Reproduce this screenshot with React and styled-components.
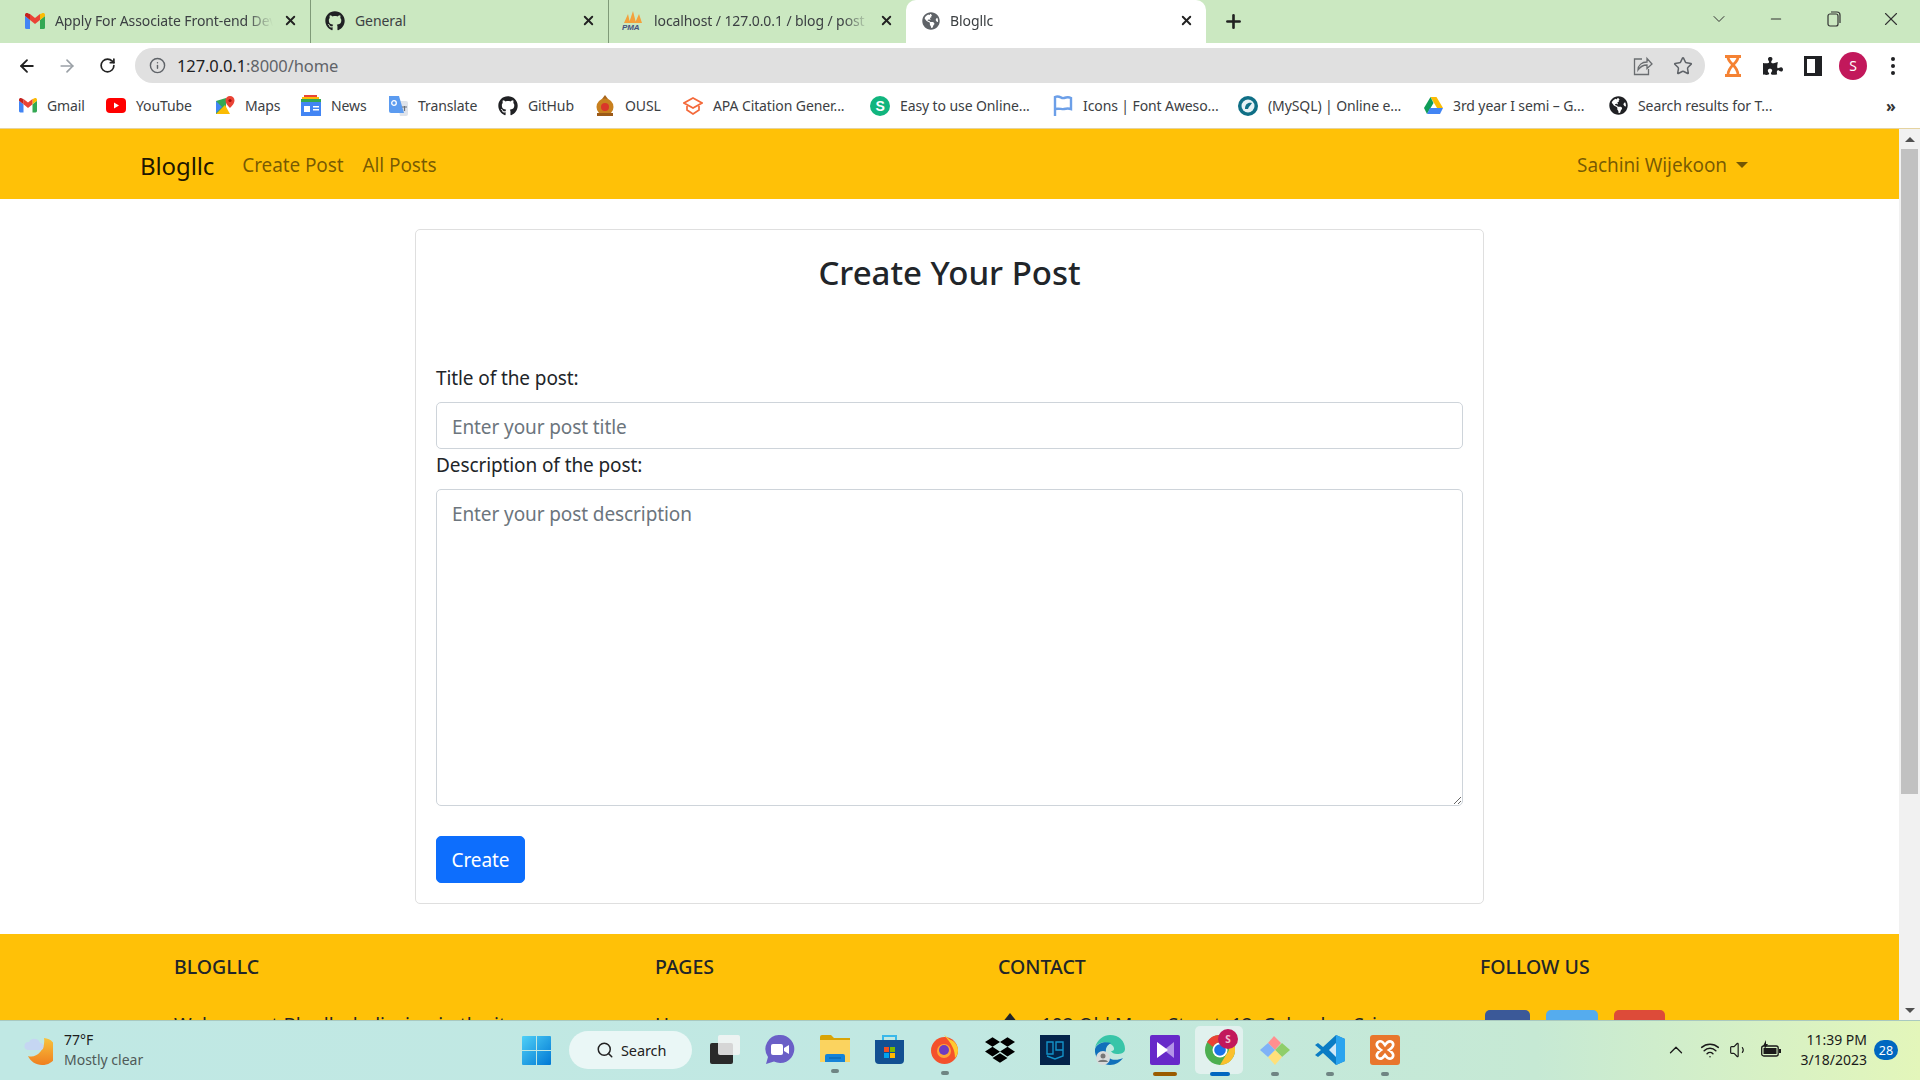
import React from "react";
import styled, { createGlobalStyle } from "styled-components";
import { FaGithub, FaGlobeAmericas, FaDropbox, FaPuzzlePiece } from "react-icons/fa";
import { ArrowLeft, ArrowRight, RotateCw, Star, Info, Search, ChevronUp, ChevronDown, X, Plus, Minus, Wifi, Volume1 } from "lucide-react";

const FONT = `"Noto Sans", "Open Sans", "Liberation Sans", sans-serif`;

const Global = createGlobalStyle`
  * { box-sizing: border-box; }
  html, body { margin: 0; padding: 0; height: 100%; overflow: hidden; background: #fff; }
  body { font-family: ${FONT}; color: #212529; }
  ::placeholder { color: #6c757d; opacity: 1; }
`;

const Screen = styled.div`
  width: 1920px;
  height: 1080px;
  display: flex;
  flex-direction: column;
  overflow: hidden;
`;

/* browser chrome */
const TabStrip = styled.div`
  height: 43px;
  flex: none;
  background: #cbe8c1;
  display: flex;
  align-items: stretch;
`;

const Tab = styled.div`
  width: ${(p) => p.$w}px;
  padding-left: ${(p) => p.$left}px;
  padding-right: 12px;
  padding-bottom: 2px;
  display: flex;
  align-items: center;
  gap: 10px;
  font-size: 14px;
  letter-spacing: -0.1px;
  color: #3c4043;
  position: relative;
  background: ${(p) => (p.$active ? "#fff" : "transparent")};
  border-radius: ${(p) => (p.$active ? "10px 10px 0 0" : "0")};
  border-right: ${(p) => (p.$sep ? "1px solid #7f9a78" : "none")};
  background-clip: ${(p) => (p.$sep ? "padding-box" : "border-box")};
`;

const TabTitle = styled.span`
  flex: 1;
  white-space: nowrap;
  overflow: hidden;
  -webkit-mask-image: linear-gradient(90deg, #000 88%, transparent);
  mask-image: linear-gradient(90deg, #000 88%, transparent);
`;

const NewTab = styled.div`
  width: 54px;
  display: flex;
  align-items: center;
  justify-content: center;
  color: #222;
`;

const WindowButtons = styled.div`
  margin-left: auto;
  display: flex;
  align-items: center;
  padding: 0 0 6px;
  color: #333;
`;

const WindowButton = styled.div`
  width: 57.5px;
  display: flex;
  justify-content: center;
`;

const Toolbar = styled.div`
  height: 40px;
  flex: none;
  background: #fff;
  display: flex;
  align-items: flex-start;
  padding: 5px 0 0 7px;
`;

const NavIcon = styled.div`
  width: 40px;
  height: 35px;
  display: flex;
  align-items: center;
  justify-content: center;
  color: ${(p) => p.$color || "#222"};
`;

const Omnibox = styled.div`
  width: 1570px;
  height: 35px;
  margin-left: 8px;
  border-radius: 18px;
  background: #e0e0e0;
  display: flex;
  align-items: center;
  padding: 0 12px 0 14px;
  font-size: 16.5px;
  letter-spacing: -0.1px;
  color: #202124;
`;

const Host = styled.span`
  margin-left: 11px;
`;

const Muted = styled.span`
  color: #5f6368;
`;

const OmniRight = styled.div`
  margin-left: auto;
  display: flex;
  align-items: center;
  gap: 20px;
  color: #5f6368;
`;

const ToolRight = styled.div`
  margin-left: 8px;
  display: flex;
  align-items: center;
`;

const Avatar = styled.div`
  width: 28px;
  height: 28px;
  border-radius: 50%;
  background: #c2185b;
  color: #fff;
  font-size: 14px;
  display: flex;
  align-items: center;
  justify-content: center;
`;

const Bookmarks = styled.div`
  height: 46px;
  flex: none;
  background: #fff;
  display: flex;
  align-items: center;
  padding: 0 0 0 19px;
  border-bottom: 1px solid #e5d3a0;
`;

const Bookmark = styled.div`
  width: ${(p) => p.$w}px;
  display: flex;
  align-items: center;
  gap: 10px;
  font-size: 14px;
  letter-spacing: -0.1px;
  color: #3c4043;
  white-space: nowrap;
`;

const More = styled.div`
  margin-left: 89px;
  font-size: 16px;
  font-weight: 700;
  color: #333;
`;

/* page */
const Viewport = styled.div`
  flex: 1;
  min-height: 0;
  display: flex;
`;

const Page = styled.div`
  flex: 1;
  min-width: 0;
  overflow: hidden;
`;

const Scrollbar = styled.div`
  width: 21px;
  flex: none;
  background: #f1f1f1;
  display: flex;
  flex-direction: column;
  align-items: center;
`;

const ScrollArrow = styled.div`
  height: 20px;
  flex: none;
  display: flex;
  align-items: center;
  justify-content: center;
  &::after {
    content: "";
    border-left: 5px solid transparent;
    border-right: 5px solid transparent;
    ${(p) => (p.$down ? "border-top: 5px solid #505050;" : "border-bottom: 5px solid #505050;")}
  }
`;

const ScrollThumb = styled.div`
  width: 17px;
  height: 645px;
  background: #c1c1c1;
`;

const ScrollGap = styled.div`
  flex: 1;
`;

const Navbar = styled.nav`
  height: 70px;
  background: #ffc107;
  display: flex;
  align-items: center;
  padding: 2px 151px 0 140px;
  font-size: 19px;
  letter-spacing: -0.1px;
  color: rgba(0, 0, 0, 0.55);
`;

const Brand = styled.div`
  font-size: 24px;
  letter-spacing: -0.1px;
  color: rgba(0, 0, 0, 0.9);
  margin-right: 28px;
`;

const NavLink = styled.div`
  margin-right: 19px;
`;

const UserMenu = styled.div`
  margin-left: auto;
  display: flex;
  align-items: center;
  gap: 9px;
  &::after {
    content: "";
    border-top: 6px solid rgba(0, 0, 0, 0.55);
    border-left: 6px solid transparent;
    border-right: 6px solid transparent;
  }
`;

const Card = styled.div`
  width: 1069px;
  height: 675px;
  margin: 30px 0 30px 415px;
  border: 1px solid #dfdfdf;
  border-radius: 5px;
  padding: 0 20px;
  display: flex;
  flex-direction: column;
`;

const Title = styled.h2`
  margin: 18px 0 0;
  height: 49px;
  line-height: 49px;
  font-size: 33px;
  font-weight: 500;
  text-align: center;
  color: #212529;
`;

const Label = styled.label`
  display: block;
  font-size: 19px;
  letter-spacing: -0.1px;
  line-height: 30px;
  color: #212529;
  margin-top: ${(p) => p.$top}px;
  margin-bottom: ${(p) => p.$bottom}px;
`;

const Input = styled.input`
  display: block;
  width: 100%;
  height: 47px;
  padding: 2px 15px 0;
  border: 1px solid #ced4da;
  border-radius: 5px;
  font: 19px ${FONT};
  letter-spacing: -0.1px;
  outline: none;
`;

const Textarea = styled.textarea`
  display: block;
  width: 100%;
  height: 317px;
  padding: 9px 15px;
  border: 1px solid #ced4da;
  border-radius: 5px;
  font: 19px/30px ${FONT};
  letter-spacing: -0.1px;
  outline: none;
  resize: vertical;
`;

const SubmitButton = styled.button`
  align-self: flex-start;
  width: 89px;
  height: 47px;
  margin-top: 30px;
  background: #0d6efd;
  color: #fff;
  border: 1px solid #0d6efd;
  border-radius: 5px;
  font: 19px ${FONT};
  letter-spacing: -0.1px;
`;

const Footer = styled.footer`
  background: #ffc107;
  height: 300px;
  padding: 18px 0 0 174px;
  display: grid;
  grid-template-columns: 481px 343px 482px 300px;
  align-content: start;
  font-size: 19px;
  color: #212529;
`;

const FooterTitle = styled.h5`
  margin: 0 0 28px;
  font-size: 19.5px;
  line-height: 30px;
  font-weight: 500;
  text-transform: uppercase;
`;

const FooterRow = styled.div`
  display: flex;
  align-items: center;
  gap: 23px;
  line-height: 30px;
  white-space: nowrap;
`;

const HomeMark = styled.span`
  width: 0;
  height: 0;
  margin-left: 4px;
  border-left: 8px solid transparent;
  border-right: 8px solid transparent;
  border-bottom: 10px solid #212529;
  margin-top: -14px;
`;

const SocialRow = styled.div`
  display: flex;
  gap: 16px;
  margin: 5px 0 0 5px;
`;

const SocialButton = styled.div`
  width: ${(p) => p.$w}px;
  height: 40px;
  border-radius: 5px;
  background: ${(p) => p.$bg};
`;

/* windows taskbar */
const Taskbar = styled.div`
  height: 60px;
  flex: none;
  border-top: 1px solid #a9c9c0;
  padding-bottom: 1px;
  background: linear-gradient(90deg, #c0e8e4 0%, #c1e8e2 50%, #c6e9d4 80%, #e3f6ba 100%);
  display: flex;
  align-items: center;
  position: relative;
  z-index: 1;
`;

const Weather = styled.div`
  width: 522px;
  flex: none;
  padding-left: 24px;
  display: flex;
  align-items: center;
  gap: 11px;
`;

const WeatherText = styled.div`
  font-size: 14px;
  line-height: 20px;
  color: #1c1c1c;
`;

const WeatherSub = styled.div`
  color: #4f5a58;
`;

const SearchPill = styled.div`
  width: 123px;
  height: 38px;
  margin: 0 5px 0 18px;
  border-radius: 19px;
  background: #eaf7f6;
  display: flex;
  align-items: center;
  padding-left: 27px;
  gap: 7px;
  font-size: 14.5px;
  letter-spacing: -0.1px;
  color: #222;
`;

const Slot = styled.div`
  width: 55px;
  height: 58px;
  display: flex;
  flex-direction: column;
  align-items: center;
  position: relative;
  padding-top: 14px;
  &::before {
    content: "";
    display: ${(p) => (p.$active ? "block" : "none")};
    position: absolute;
    top: 5px;
    left: 3px;
    width: 48px;
    height: 48px;
    border-radius: 5px;
    background: #e1f1ee;
  }
  svg {
    position: relative;
  }
`;

const Dot = styled.div`
  margin-top: 7px;
  position: relative;
  width: ${(p) => p.$w}px;
  height: 4px;
  border-radius: 2px;
  background: ${(p) => p.$color};
`;

const Badge = styled.div`
  position: absolute;
  top: 8px;
  left: 26px;
  width: 20px;
  height: 20px;
  border-radius: 50%;
  background: #c2185b;
  color: #f2bccf;
  font-size: 10px;
  font-weight: 700;
  display: flex;
  align-items: center;
  justify-content: center;
`;

const Tray = styled.div`
  margin-left: auto;
  padding-right: 22px;
  display: flex;
  align-items: center;
  color: #1a1a1a;
`;

const TrayIcon = styled.div`
  width: ${(p) => p.$w}px;
  display: flex;
  justify-content: center;
`;

const Clock = styled.div`
  margin: 0 7px 0 13px;
  font-size: 14px;
  line-height: 20px;
  text-align: right;
`;

const CountBadge = styled.div`
  width: 24px;
  height: 20px;
  border-radius: 10px;
  background: #0067c0;
  color: #fff;
  font-size: 12.5px;
  display: flex;
  align-items: center;
  justify-content: center;
`;

/* icons */
const Gmail = ({ s = 20 }) => (
  <svg width={s} height={s * 0.8} viewBox="0 0 20 16">
    <path d="M0 3v11.5A1.5 1.5 0 0 0 1.5 16H5V7z" fill="#4285f4" />
    <path d="M20 3v11.5a1.5 1.5 0 0 1-1.5 1.5H15V7z" fill="#34a853" />
    <path d="M15 1v6l5-4V2c0-2-2-2.500-3.200-1.500z" fill="#fbbc04" />
    <path d="M5 7V1l5 4 5-4v6l-5 4z" fill="#ea4335" />
    <path d="M0 2c0-2 2-2.500 3.200-1.500L5 1v6L0 3z" fill="#c5221f" />
  </svg>
);

const YouTube = () => (
  <svg width="20" height="15" viewBox="0 0 20 15">
    <rect width="20" height="15" rx="4" fill="#f00" />
    <path d="M8 4.500v6l5-3z" fill="#fff" />
  </svg>
);

const Maps = () => (
  <svg width="20" height="20" viewBox="0 0 20 20">
    <path d="M1 5l10-3v16L1 18z" fill="#34a853" />
    <path d="M1 18l9-9 5 9z" fill="#fbbc04" />
    <path d="M1 5l6 6-6 6z" fill="#4285f4" />
    <path d="M15 0a4.500 4.500 0 0 1 4.500 4.500C19.500 8 15 12 15 12s-4.500-4-4.500-7.500A4.500 4.500 0 0 1 15 0z" fill="#ea4335" />
    <circle cx="15" cy="4.500" r="1.600" fill="#a50e0e" />
  </svg>
);

const News = () => (
  <svg width="20" height="21" viewBox="0 0 20 21">
    <path d="M3 0h13v5H3z" fill="#ea4335" />
    <path d="M1 2h17v5H1z" fill="#fbbc04" />
    <path d="M0 4h20v5H0z" fill="#34a853" />
    <rect y="7" width="20" height="14" fill="#4285f4" />
    <path d="M3 11h6v6H3zM12 11h6v1.500h-6zM12 14h6v1.500h-6z" fill="#fff" />
  </svg>
);

const Translate = () => (
  <svg width="19" height="20" viewBox="0 0 19 20">
    <path d="M8 5h9a2 2 0 0 1 2 2v11a2 2 0 0 1-2 2h-6z" fill="#dfe3ea" />
    <path d="M0 0h10l5 17H2a2 2 0 0 1-2-2z" fill="#5b9bf0" />
    <circle cx="5" cy="7" r="2.300" fill="none" stroke="#fff" strokeWidth="1.300" />
    <path d="M13 11h5M15.500 10v5" stroke="#6a7078" strokeWidth="1.200" />
  </svg>
);

const Crest = () => (
  <svg width="20" height="22" viewBox="0 0 20 22">
    <path d="M10 0l3 4h-6z" fill="#a8651b" />
    <circle cx="10" cy="12" r="8.500" fill="#c8801f" />
    <circle cx="10" cy="12" r="4" fill="#d9352a" />
    <path d="M2 18h16v3H2z" fill="#9c5a18" />
  </svg>
);

const Cap = () => (
  <svg width="20" height="18" viewBox="0 0 20 18" fill="none" stroke="#f4693a" strokeWidth="1.700">
    <path d="M10 1l9 5-9 5-9-5z" />
    <path d="M4 9v4l6 4 6-4V9" />
  </svg>
);

const Circled = ({ bg, children }) => (
  <svg width="20" height="20" viewBox="0 0 20 20">
    <circle cx="10" cy="10" r="10" fill={bg} />
    {children}
  </svg>
);

const Flag = () => (
  <svg width="20" height="21" viewBox="0 0 20 21" fill="none" stroke="#6c9fe8" strokeWidth="2.400">
    <path d="M2 21V2c5-2 6 2 9 1s5-1 7 0v11c-3-1-5-.500-7 0s-5-1-9 0" />
  </svg>
);

const Drive = () => (
  <svg width="19" height="17" viewBox="0 0 19 17">
    <path d="M6.500 0h6l6.500 11h-6z" fill="#fbbc04" />
    <path d="M6.500 0L0 11l3 6 6.500-11z" fill="#0f9d58" />
    <path d="M3 17h13l3-6H6z" fill="#4285f4" />
  </svg>
);

const Hourglass = () => (
  <svg width="18" height="22" viewBox="0 0 18 22" fill="none" stroke="#f58233" strokeWidth="2.800">
    <path d="M1 1.500h16M1 20.500h16M4 2c0 7 10 8 10 18M14 2C14 9 4 10 4 20" />
  </svg>
);

const SidePanel = () => (
  <svg width="18" height="20" viewBox="0 0 18 20">
    <path d="M0 0h18v20H0z" fill="#202124" />
    <path d="M3 3h8v14H3z" fill="#fff" />
  </svg>
);

const Share = () => (
  <svg width="20" height="20" viewBox="0 0 20 20" fill="none" stroke="#6a6d70" strokeWidth="1.300">
    <path d="M9 3H1.500v15.500h14V13" />
    <path d="M5 14c0-5 4-8 9-8V2.500l5 5.500-5 4.500V9c-4 0-7 2-9 5z" />
  </svg>
);

const Restore = () => (
  <svg width="14" height="16" viewBox="0 0 14 16" fill="none" stroke="#333" strokeWidth="1.200">
    <rect x="1" y="3" width="10" height="12" rx="2" />
    <path d="M4 1h6a3 3 0 0 1 3 3v8" />
  </svg>
);

const PmaLogo = () => (
  <svg width="22" height="20" viewBox="0 0 22 20">
    <path d="M2 12L6 3l2 9zM7 12l4-12 3 12zM13 12l4-9 3 9z" fill="#f3a13b" />
    <text x="0" y="19" fontSize="8" fontWeight="700" fontStyle="italic" fill="#45507f" fontFamily="Liberation Sans">PMA</text>
  </svg>
);

const WeatherIcon = () => (
  <svg width="29" height="30" viewBox="0 0 29 30">
    <defs>
      <linearGradient id="moon" x1="0" y1="0" x2="0" y2="1">
        <stop offset="0" stopColor="#f8c33c" />
        <stop offset="1" stopColor="#ef7f1f" />
      </linearGradient>
    </defs>
    <path d="M20 3a13.500 13.500 0 0 1-2 27C12 30 6 26 4 21c8 3 18-6 16-18z" fill="url(#moon)" />
    <path d="M4 15a4 4 0 0 1 1-8 6 6 0 0 1 11 1 3.500 3.500 0 0 1 0 7z" fill="#c5d6f2" />
  </svg>
);

const WinLogo = () => (
  <svg width="29" height="29" viewBox="0 0 29 29">
    <defs>
      <linearGradient id="win" x1="0" y1="0" x2="1" y2="1">
        <stop offset="0" stopColor="#4fd0f7" />
        <stop offset="1" stopColor="#0078d4" />
      </linearGradient>
    </defs>
    <path d="M1 0h13v14H0V1a1 1 0 0 1 1-1zM15 0h13a1 1 0 0 1 1 1v13H15zM0 15h14v14H1a1 1 0 0 1-1-1zM15 15h14v13a1 1 0 0 1-1 1H15z" fill="url(#win)" />
  </svg>
);

const TaskView = () => (
  <svg width="30" height="29" viewBox="0 0 30 29">
    <rect y="8" width="23" height="21" rx="2" fill="#2a2a2a" />
    <rect x="8" y="0" width="22" height="20" rx="2" fill="#f4f4f4" fillOpacity="0.85" />
  </svg>
);

const Chat = () => (
  <svg width="30" height="29" viewBox="0 0 30 29">
    <path d="M15 0a14 14 0 1 1-6 26.500L1 29l2-7A14 14 0 0 1 15 0z" fill="#6a5fc7" />
    <rect x="6" y="9" width="12" height="11" rx="2" fill="#fff" />
    <path d="M19 13l5-3v9l-5-3z" fill="#fff" />
  </svg>
);

const Folder = () => (
  <svg width="30" height="27" viewBox="0 0 30 27">
    <path d="M0 2a2 2 0 0 1 2-2h9l3 3h16v6H0z" fill="#d9a406" />
    <path d="M0 5h30v22H0z" fill="#fbd35f" />
    <path d="M5 21a2 2 0 0 1 2-2h16a2 2 0 0 1 2 2v6H5z" fill="#1583d8" />
    <path d="M9 23h12" stroke="#0b5da3" strokeWidth="1" />
  </svg>
);

const Store = () => (
  <svg width="29" height="29" viewBox="0 0 29 29">
    <path d="M8 6V1h13v5" fill="none" stroke="#39b8ea" strokeWidth="2" />
    <path d="M0 5h29v20a4 4 0 0 1-4 4H4a4 4 0 0 1-4-4z" fill="#125092" />
    <path d="M9 12h5v5H9z" fill="#f25022" />
    <path d="M15 12h5v5h-5z" fill="#7fba00" />
    <path d="M9 18h5v5H9z" fill="#00a4ef" />
    <path d="M15 18h5v5h-5z" fill="#ffb900" />
  </svg>
);

const Firefox = () => (
  <svg width="29" height="29" viewBox="0 0 29 29">
    <circle cx="14.500" cy="15.500" r="13.500" fill="#f4512c" />
    <path d="M14 0c4 2 4 4 7 5s7 5 7 10c0 3-1 6-3 8 0-8-3-14-11-23z" fill="#ffca30" />
    <circle cx="14" cy="16" r="7" fill="#ffa436" />
    <circle cx="14" cy="15" r="5" fill="#6e3cc0" />
  </svg>
);

const DarkTile = () => (
  <svg width="30" height="30" viewBox="0 0 30 30">
    <rect width="30" height="30" fill="#04244a" />
    <path d="M7 7v12h6V7zM16 7h7v8h-7zM23 15v6l-8 3-8-3" fill="none" stroke="#1392c9" strokeWidth="1.400" />
  </svg>
);

const Edge = () => (
  <svg width="30" height="30" viewBox="0 0 30 30">
    <path d="M0 13C2 4 9 0 15 0c9 0 15 6 15 14 0 4-4 5-8 5-3 0-5-1-6-3 3 0 4-2 2-5C14 6 3 6 0 13z" fill="#38c5a8" />
    <path d="M0 14c-1 9 7 16 15 16 6 0 10-3 13-7-6 3-16 3-17-6-1-5 3-8 5-9C9 6 2 8 0 14z" fill="#1170ba" />
    <circle cx="8" cy="23" r="7" fill="#d8dbdb" />
    <circle cx="8" cy="21" r="2.500" fill="#777" />
    <path d="M3 27c1-3 9-3 10 0z" fill="#777" />
  </svg>
);

const Purple = () => (
  <svg width="30" height="30" viewBox="0 0 30 30">
    <rect width="30" height="30" rx="2" fill="#6729c9" />
    <path d="M24 7L14 15l10 8z" fill="#c7aef0" fillOpacity="0.8" />
    <path d="M7 7l11 8-11 8z" fill="#fff" />
  </svg>
);

const Chrome = () => (
  <svg width="30" height="30" viewBox="0 0 30 30">
    <circle cx="15" cy="15" r="15" fill="#4caf50" />
    <path d="M15 0a15 15 0 0 1 13 7.500H15a7.500 7.500 0 0 0-7 4.500L2 7A15 15 0 0 1 15 0z" fill="#ea4335" />
    <path d="M28 7.500A15 15 0 0 1 15 30l6.500-11a7.500 7.500 0 0 0 0-11.500z" fill="#fbc02d" />
    <circle cx="15" cy="15" r="7.500" fill="#fff" />
    <circle cx="15" cy="15" r="5.800" fill="#1a73e8" />
  </svg>
);

const Git = () => (
  <svg width="30" height="30" viewBox="0 0 30 30">
    <path d="M15 15L8 8l6-7 7 7z" fill="#ff8f8f" />
    <path d="M15 15l7-7 8 7-8 7z" fill="#8fce6a" />
    <path d="M15 15l7 7-7 8-7-8z" fill="#ffe07a" />
    <path d="M15 15l-7 7-8-7 8-7z" fill="#7fb2f7" />
  </svg>
);

const VsCode = () => (
  <svg width="30" height="30" viewBox="0 0 30 30">
    <path d="M21 0l9 4v22l-9 4L8 18l-5 4-3-2 6-5-6-5 3-2 5 4z" fill="#0a7cc4" />
    <path d="M21 0l9 4v22l-9 4z" fill="#2aa4ef" />
    <path d="M21 8l-7 7 7 7z" fill="#cfe8f8" />
  </svg>
);

const Xampp = () => (
  <svg width="30" height="30" viewBox="0 0 30 30">
    <rect width="30" height="30" rx="3" fill="#e8762d" />
    <path d="M8 7c3-2 5 0 7 3 2-3 4-5 7-3 3 3 0 6-3 8 3 2 6 5 3 8-3 2-5 0-7-3-2 3-4 5-7 3-3-3 0-6 3-8-3-2-6-5-3-8z" fill="none" stroke="#fff" strokeWidth="2.600" />
  </svg>
);

const Battery = () => (
  <svg width="20" height="20" viewBox="0 0 20 20">
    <rect x="0.700" y="6" width="16.500" height="10" rx="2" fill="none" stroke="#1a1a1a" strokeWidth="1.300" />
    <rect x="2.500" y="8" width="13" height="6" fill="#1a1a1a" />
    <path d="M18 9h2v4h-2z" fill="#1a1a1a" />
    <path d="M5 0L2 6h2l-1 4 4-6H5z" fill="#1a1a1a" />
  </svg>
);

const bookmarks = [
  { w: 87, label: "Gmail", icon: <Gmail s={18} /> },
  { w: 109, label: "YouTube", icon: <YouTube /> },
  { w: 86, label: "Maps", icon: <Maps /> },
  { w: 88, label: "News", icon: <News /> },
  { w: 109, label: "Translate", icon: <Translate /> },
  { w: 97, label: "GitHub", icon: <FaGithub size={20} color="#202124" /> },
  { w: 88, label: "OUSL", icon: <Crest /> },
  { w: 187, label: "APA Citation Gener...", icon: <Cap /> },
  { w: 183, label: "Easy to use Online...", icon: <Circled bg="#11b57e"><text x="10" y="15" textAnchor="middle" fontSize="14" fontWeight="700" fill="#fff" fontFamily="Liberation Sans">S</text></Circled> },
  { w: 185, label: "Icons | Font Aweso...", icon: <Flag /> },
  { w: 186, label: "(MySQL) | Online e...", icon: <Circled bg="#0f6f86"><circle cx="10" cy="10" r="6.500" fill="#e6f2f5" /><path d="M7 13c0-5 3-7 7-6-1 2-3 3-4 6z" fill="#0f6f86" /></Circled> },
  { w: 185, label: "3rd year I semi – G...", icon: <Drive /> },
  { w: 188, label: "Search results for T...", icon: <FaGlobeAmericas size={19} color="#202124" /> },
];

const taskItems = [
  { icon: <TaskView /> },
  { icon: <Chat /> },
  { icon: <Folder />, dot: 8, color: "#6f8583" },
  { icon: <Store /> },
  { icon: <Firefox />, dot: 8, color: "#6f8583" },
  { icon: <FaDropbox size={30} color="#000" /> },
  { icon: <DarkTile /> },
  { icon: <Edge /> },
  { icon: <Purple />, dot: 24, color: "#9a5c00" },
  { icon: <Chrome />, dot: 20, color: "#0067c0", active: true, badge: "S" },
  { icon: <Git />, dot: 8, color: "#6f8583" },
  { icon: <VsCode />, dot: 8, color: "#6f8583" },
  { icon: <Xampp />, dot: 8, color: "#6f8583" },
];

const App = () => {
  return (
    <Screen>
      <Global />
      <TabStrip>
        <Tab $w={311} $left={25} $sep>
          <Gmail />
          <TabTitle>Apply For Associate Front-end Developer</TabTitle>
          <X size={15} strokeWidth={3} color="#222" />
        </Tab>
        <Tab $w={298} $left={14} $sep>
          <FaGithub size={20} color="#202124" />
          General
          <X size={15} strokeWidth={3} color="#222" style={{ marginLeft: "auto" }} />
        </Tab>
        <Tab $w={297} $left={13}>
          <PmaLogo />
          <TabTitle>localhost / 127.0.0.1 / blog / post</TabTitle>
          <X size={15} strokeWidth={3} color="#222" />
        </Tab>
        <Tab $w={300} $left={16} $active>
          <FaGlobeAmericas size={18} color="#5f6368" />
          <TabTitle>Blogllc</TabTitle>
          <X size={15} strokeWidth={3} color="#222" />
        </Tab>
        <NewTab>
          <Plus size={21} strokeWidth={3} />
        </NewTab>
        <WindowButtons>
          <WindowButton><ChevronDown size={20} strokeWidth={1.2} /></WindowButton>
          <WindowButton><Minus size={16} strokeWidth={1.6} /></WindowButton>
          <WindowButton><Restore /></WindowButton>
          <WindowButton><X size={22} strokeWidth={1.2} /></WindowButton>
        </WindowButtons>
      </TabStrip>

      <Toolbar>
        <NavIcon><ArrowLeft size={20} strokeWidth={2.2} /></NavIcon>
        <NavIcon $color="#9aa0a6"><ArrowRight size={20} strokeWidth={2} /></NavIcon>
        <NavIcon><RotateCw size={17} strokeWidth={2.4} /></NavIcon>
        <Omnibox>
          <Info size={17} strokeWidth={2} color="#5f6368" />
          <Host>127.0.0.1<Muted>:8000/home</Muted></Host>
          <OmniRight>
            <Share />
            <Star size={20} strokeWidth={1.8} />
          </OmniRight>
        </Omnibox>
        <ToolRight>
          <NavIcon><Hourglass /></NavIcon>
          <NavIcon><FaPuzzlePiece size={20} color="#202124" /></NavIcon>
          <NavIcon><SidePanel /></NavIcon>
          <NavIcon><Avatar>S</Avatar></NavIcon>
          <NavIcon>
            <svg width="4" height="18" viewBox="0 0 4 18" fill="#202124">
              <circle cx="2" cy="2" r="2" /><circle cx="2" cy="9" r="2" /><circle cx="2" cy="16" r="2" />
            </svg>
          </NavIcon>
        </ToolRight>
      </Toolbar>

      <Bookmarks>
        {bookmarks.map((b) => (
          <Bookmark key={b.label} $w={b.w}>{b.icon}{b.label}</Bookmark>
        ))}
        <More>»</More>
      </Bookmarks>

      <Viewport>
        <Page>
          <Navbar>
            <Brand>Blogllc</Brand>
            <NavLink>Create Post</NavLink>
            <NavLink>All Posts</NavLink>
            <UserMenu>Sachini Wijekoon</UserMenu>
          </Navbar>
          <Card>
            <Title>Create Your Post</Title>
            <Label $top={66} $bottom={9} htmlFor="title">Title of the post:</Label>
            <Input id="title" placeholder="Enter your post title" />
            <Label $top={1} $bottom={9} htmlFor="desc">Description of the post:</Label>
            <Textarea id="desc" placeholder="Enter your post description" />
            <SubmitButton>Create</SubmitButton>
          </Card>
          <Footer>
            <div>
              <FooterTitle>Blogllc</FooterTitle>
              <FooterRow>Welcome at Blogllc, believing in the it</FooterRow>
            </div>
            <div>
              <FooterTitle>Pages</FooterTitle>
              <FooterRow>Home</FooterRow>
            </div>
            <div>
              <FooterTitle>Contact</FooterTitle>
              <FooterRow><HomeMark />102 Old Moor Street, 12, Colombo, Sri</FooterRow>
            </div>
            <div>
              <FooterTitle>Follow us</FooterTitle>
              <SocialRow>
                <SocialButton $w={45} $bg="#3b5998" />
                <SocialButton $w={52} $bg="#55acee" />
                <SocialButton $w={51} $bg="#dd4b39" />
              </SocialRow>
            </div>
          </Footer>
        </Page>
        <Scrollbar>
          <ScrollArrow />
          <ScrollThumb />
          <ScrollGap />
          <ScrollArrow $down />
        </Scrollbar>
      </Viewport>

      <Taskbar>
        <Weather>
          <WeatherIcon />
          <WeatherText>
            77°F
            <WeatherSub>Mostly clear</WeatherSub>
          </WeatherText>
        </Weather>
        <WinLogo />
        <SearchPill><Search size={18} strokeWidth={2} />Search</SearchPill>
        {taskItems.map((t, i) => (
          <Slot key={i} $active={t.active}>
            {t.icon}
            {t.dot && <Dot $w={t.dot} $color={t.color} />}
            {t.badge && <Badge>{t.badge}</Badge>}
          </Slot>
        ))}
        <Tray>
          <TrayIcon $w={40}><ChevronUp size={22} strokeWidth={1.4} /></TrayIcon>
          <TrayIcon $w={28}><Wifi size={20} strokeWidth={1.8} /></TrayIcon>
          <TrayIcon $w={30}><Volume1 size={20} strokeWidth={1.4} /></TrayIcon>
          <TrayIcon $w={34}><Battery /></TrayIcon>
          <Clock>
            11:39 PM
            <br />
            3/18/2023
          </Clock>
          <CountBadge>28</CountBadge>
        </Tray>
      </Taskbar>
    </Screen>
  );
};

export default App;
